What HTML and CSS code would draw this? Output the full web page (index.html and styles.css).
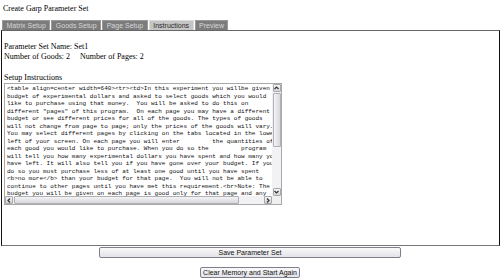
FILE: index.html
```html
<!DOCTYPE html>
<html>

<head>
    <meta charset="utf-8">
    <title>Create Garp Parameter Set</title>
    <link rel="stylesheet" href="styles.css">
</head>

<body>
    <div class="title">Create Garp Parameter Set</div>
    <div class="tabs">
        <span class="tab">Matrix Setup</span>
        <span class="tab">Goods Setup</span>
        <span class="tab">Page Setup</span>
        <span class="tab active">Instructions</span>
        <span class="tab">Preview</span>
    </div>
    <div class="panel">
        <div>Parameter Set Name: Set1</div>
        <div>Number of Goods: 2<span class="gap">Number of Pages: 2</span></div>
        <div class="label">Setup Instructions</div>
        <div class="editor">
            <textarea id="instructions" wrap="off"><table align=center width=640><tr><td>In this experiment you willbe given a
budget of experimental dollars and asked to select goods which you would
like to purchase using that money.  You will be asked to do this on
different "pages" of this program.  On each page you may have a different
budget or see different prices for all of the goods. The types of goods
will not change from page to page; only the prices of the goods will vary.
You may select different pages by clicking on the tabs located in the lower
left of your screen. On each page you will enter         the quantities of
each good you would like to purchase. When you do so the         program
will tell you how many experimental dollars you have spent and how many you
have left. It will also tell you if you have gone over your budget. If you
do so you must purchase less of at least one good until you have spent
<b>no more</b> than your budget for that page.  You will not be able to
continue to other pages until you have met this requirement.<br>Note: The
budget you will be given on each page is good only for that page and any
money you do not spend on a page is lost. It can not be carried over to
another page.<br>When you are satisfied with your choices on every page
click the Finish button. You will then be asked to confirm that you are
done. Once you have confirmed, your choices will be recorded and one of
the pages will be selected at random. You will be paid according to the
choices you made on that page.</td></tr></table>
</textarea>
            <div class="vbar">
                <span class="arrow">
                    <svg width="5" height="4" viewBox="0 0 5 4"><polyline points="0.5,3 2.5,1 4.5,3" fill="none" stroke="#333" stroke-width="1.2"/></svg>
                </span>
                <span class="track"><span class="thumb"></span></span>
                <span class="arrow">
                    <svg width="5" height="4" viewBox="0 0 5 4"><polyline points="0.5,1 2.5,3 4.5,1" fill="none" stroke="#333" stroke-width="1.2"/></svg>
                </span>
            </div>
            <div class="hbar">
                <span class="arrow">
                    <svg width="4" height="5" viewBox="0 0 4 5"><polyline points="3,0.5 1,2.5 3,4.5" fill="none" stroke="#333" stroke-width="1.2"/></svg>
                </span>
                <span class="track"><span class="thumb"></span></span>
                <span class="arrow">
                    <svg width="4" height="5" viewBox="0 0 4 5"><polyline points="1,0.5 3,2.5 1,4.5" fill="none" stroke="#333" stroke-width="1.2"/></svg>
                </span>
            </div>
            <div class="corner"></div>
        </div>
    </div>
    <div class="actions">
        <button class="save">Save Parameter Set</button>
        <button class="clear">Clear Memory and Start Again</button>
    </div>
</body>

</html>
```

FILE: styles.css
```css
html,
body {
    margin: 0;
    padding: 0;
    font-family: "Liberation Serif", serif;
    font-size: 8px;
    color: #000;
    background: #fff;
}

.title {
    padding: 4px 3px 0;
    line-height: 9px;
}

.tabs {
    display: flex;
    gap: 1px;
    margin-top: 7px;
    padding-left: 2px;

    & .tab {
        height: 9px;
        line-height: 9px;
        padding: 0 3.5px;
        font-family: "Liberation Sans", sans-serif;
        font-size: 7px;
        color: #d6d6d6;
        background: #7c7c7c;
        border: 1px solid #9a9a9a;
        border-bottom: none;
    }

    & .active {
        color: #2a2a2a;
        background: #c4c4c4;
        border-color: #dcdcdc;
    }
}

.panel {
    margin-left: 1px;
    height: 203px;
    padding: 11px 2px 0;
    line-height: 10px;
    border-top: 1px solid #666;
    border-bottom: 1px solid #777;
    border-left: 1px solid #111;
    border-right: 1px solid #111;

    & .gap {
        margin-left: 10px;
    }

    & .label {
        margin-top: 11px;
    }
}

.editor {
    display: grid;
    grid-template-columns: 1fr 9px;
    grid-template-rows: 1fr 8px;
    width: 278px;
    height: 122px;
    box-sizing: border-box;
    border: 1px solid #a9a9a9;
    background: #fff;
}

#instructions {
    display: block;
    width: 100%;
    height: 100%;
    box-sizing: border-box;
    margin: 0;
    padding: 1px 1px 0 2px;
    font-family: "Liberation Mono", monospace;
    font-size: 6px;
    line-height: 7.5px;
    color: #111;
    border: none;
    outline: none;
    white-space: pre;
    resize: none;
    overflow: hidden;
}

.vbar,
.hbar {
    display: flex;
    background: #f2f2f4;

    & .arrow {
        display: flex;
        align-items: center;
        justify-content: center;
        flex: 0 0 8px;
        height: 8px;
        box-sizing: border-box;
        background: linear-gradient(#f6f6f6, #d6d6d8);
        border: 1px solid #a8a8ac;
        border-radius: 1px;
    }

    & .track {
        display: flex;
        flex: 1;
    }

    & .thumb {
        display: block;
        box-sizing: border-box;
        background: linear-gradient(90deg, #f4f4f6, #d8d8dc);
        border: 1px solid #b0b0b6;
        border-radius: 1px;
    }
}

.vbar {
    flex-direction: column;
    align-items: center;

    & .arrow {
        width: 8px;
    }

    & .track {
        flex-direction: column;
        width: 8px;
        padding: 1px 0;
    }

    & .thumb {
        height: 54px;
    }
}

.hbar {
    align-items: center;

    & .track {
        padding: 0 1px;
        height: 8px;
    }

    & .thumb {
        width: 225px;
        background: linear-gradient(#f4f4f6, #d8d8dc);
    }
}

.corner {
    background: #f0f0f0;
}

.actions {
    display: flex;
    flex-direction: column;
    align-items: center;

    & button {
        height: 11px;
        padding: 0;
        font-family: "Liberation Sans", sans-serif;
        font-size: 7px;
        line-height: 9px;
        color: #111;
        background: linear-gradient(#fafafa, #e2e2e8);
        border: 1px solid #7d7f8c;
        border-radius: 2px;
    }

    & .save {
        width: 302px;
        margin-top: 1px;
    }

    & .clear {
        width: 100px;
        margin-top: 9px;
    }
}
```
